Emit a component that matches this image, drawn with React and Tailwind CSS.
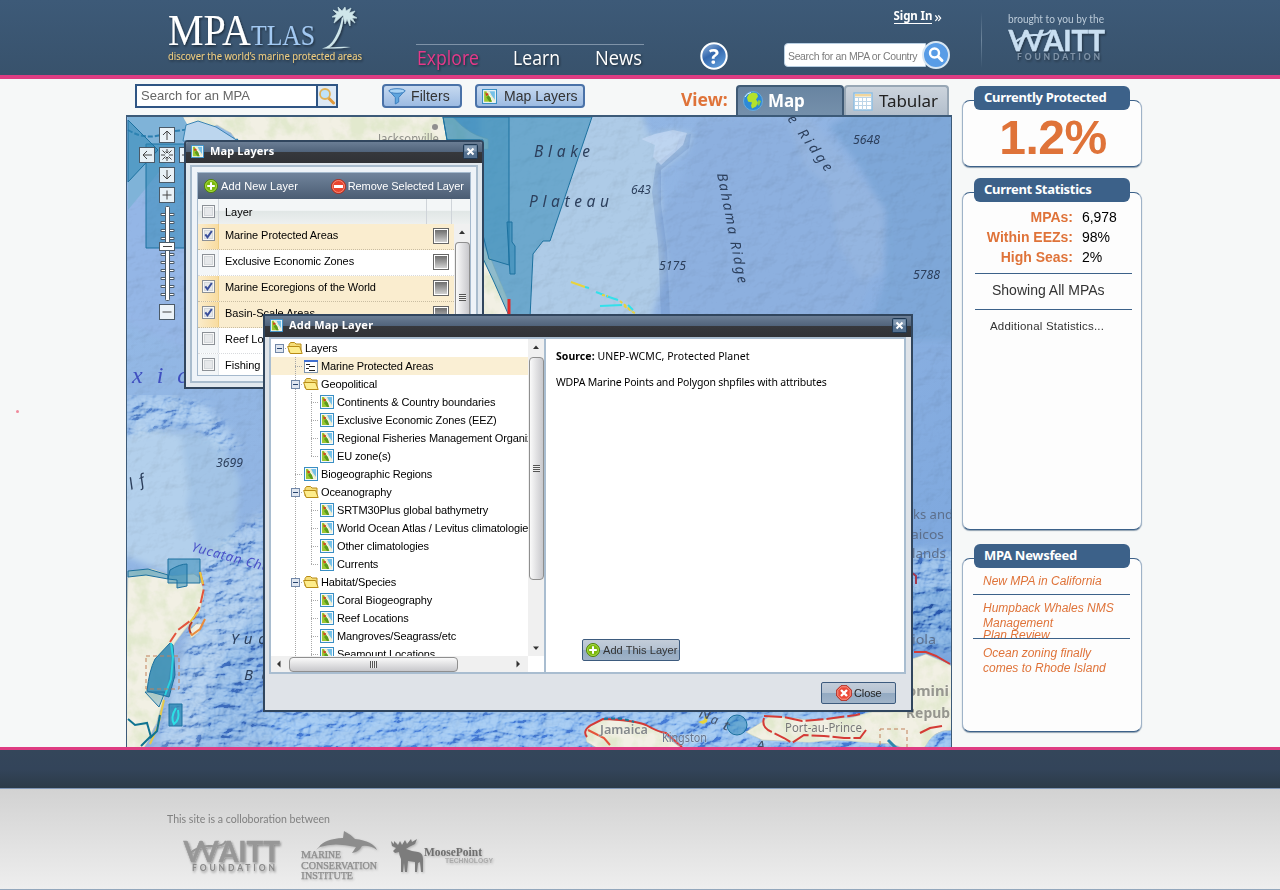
import React from "react";

const SANS = "'Liberation Sans', sans-serif";
const HUMAN = "'Noto Sans', 'Open Sans', sans-serif";

function T({ x, y, w, s = 13, f = HUMAN, fill = "#2c3f5c", squeeze = true, children, ...rest }) {
  return (
    <text
      x={x}
      y={y}
      fontSize={s}
      fontFamily={f}
      fill={fill}
      textLength={w}
      lengthAdjust={squeeze ? "spacingAndGlyphs" : "spacing"}
      {...rest}
    >
      {children}
    </text>
  );
}

/* ---------- icons ---------- */

function MapIcon({ size = 14 }) {
  return (
    <svg width={size} height={size} viewBox="0 0 14 14" className="shrink-0">
      <rect x="0" y="0" width="14" height="14" fill="#3a8fc4" />
      <rect x="1" y="1" width="12" height="12" fill="#f4f8fa" />
      <path d="M2 2h2.500l5 10H2z" fill="#9bc832" />
      <path d="M5 2H12v9z" fill="#74c0e8" />
      <path d="M4 2l1.500 2.500L8 6l1 3 1.500 3H12V10L9 6 7 2z" fill="#f1eed0" />
      <path d="M3 3l2 2 -1 2z" fill="#d8371f" />
      <path d="M4 8l2-2 2 2 1 4H7z" fill="#5c9a1c" />
      <circle cx="5" cy="5" r="1" fill="#d8371f" />
    </svg>
  );
}

function Folder() {
  return (
    <svg width="16" height="14" viewBox="0 0 16 14" className="shrink-0">
      <path d="M2 11V3.500L3.500 1.500h4L9 3h5v8z" fill="#f5dd78" stroke="#b98c16" />
      <path d="M.6 5.500h12l2.600 7H3.200z" fill="#fdec8c" stroke="#b98c16" strokeLinejoin="round" />
    </svg>
  );
}

function ListIcon() {
  return (
    <svg width="14" height="13" viewBox="0 0 14 13" className="shrink-0">
      <rect x=".5" y=".5" width="13" height="12" fill="#fff" stroke="#7d93ad" />
      <rect x="0" y="0" width="14" height="2" fill="#3f6fd0" />
      <path d="M2 4.500h4M5 6.500h6M2 8.500h3M5 10.500h6" stroke="#222" />
    </svg>
  );
}

function PlusIcon({ size = 14 }) {
  return (
    <svg width={size} height={size} viewBox="0 0 14 14" className="shrink-0">
      <circle cx="7" cy="7" r="6.500" fill="#7cb80c" stroke="#4f8208" />
      <circle cx="7" cy="7" r="5.500" fill="none" stroke="#a6d94a" />
      <path d="M7 3.200v7.600M3.200 7h7.600" stroke="#fff" strokeWidth="2" />
    </svg>
  );
}

function MinusIcon() {
  return (
    <svg width="15" height="15" viewBox="0 0 15 15" className="shrink-0">
      <circle cx="7.500" cy="7.500" r="7" fill="#e8452f" stroke="#b02a1a" />
      <circle cx="7.500" cy="7.500" r="6" fill="none" stroke="#f68c78" />
      <path d="M3 7.500h9" stroke="#fff" strokeWidth="3" />
    </svg>
  );
}

function StopIcon() {
  return (
    <svg width="16" height="16" viewBox="0 0 16 16" className="shrink-0">
      <path d="M5 .7h6L15.300 5v6L11 15.300H5L.7 11V5z" fill="#ec4a38" stroke="#b7291c" />
      <path d="M5.400 1.800h5.200l3.600 3.600v5.200l-3.600 3.600H5.400l-3.600-3.600V5.400z" fill="none" stroke="#f79a8c" />
      <path d="M5 5l6 6M11 5l-6 6" stroke="#fff" strokeWidth="2.400" />
    </svg>
  );
}

function CloseButton() {
  return (
    <svg width="15" height="15" viewBox="0 0 15 15" className="shrink-0">
      <rect x=".5" y=".5" width="14" height="14" rx="1" fill="#53708f" stroke="#1f3852" />
      <rect x="1.500" y="1.500" width="12" height="6" fill="#8299b2" />
      <path d="M4.500 4.500l6 6M10.500 4.500l-6 6" stroke="#fff" strokeWidth="2" />
    </svg>
  );
}

function CheckBox({ on }) {
  return (
    <svg width="13" height="13" viewBox="0 0 13 13" className="shrink-0">
      <rect x=".5" y=".5" width="12" height="12" fill="#f8f8f8" stroke="#8c9197" />
      <rect x="2.500" y="2.500" width="8" height="8" fill="#e6e8ea" stroke="#d3d7da" />
      {on && <path d="M3.300 6.300l2.200 3L9.800 3" fill="none" stroke="#3a4f9b" strokeWidth="2" />}
    </svg>
  );
}

/* ---------- scroll bars ---------- */

function Arrow({ dir }) {
  const d = {
    up: "M1 5l3-3.500L7 5z",
    down: "M1 2.500l3 3.500 3-3.500z",
    left: "M5.500 0.500v7L2 4z",
    right: "M2.500 0.500v7L6 4z",
  }[dir];
  return (
    <svg width="8" height="8" viewBox="0 0 8 8">
      <path d={d} fill="#333" />
    </svg>
  );
}

/* ---------- logos ---------- */

function Waitt({ main, sub, shadow }) {
  return (
    <svg width="104" height="36" viewBox="0 0 104 36" className="overflow-visible">
      <defs>
        <filter id={shadow} x="-10%" y="-10%" width="130%" height="140%">
          <feDropShadow dx="1" dy="1.500" stdDeviation=".8" floodOpacity=".4" />
        </filter>
      </defs>
      <g filter={`url(#${shadow})`}>
        <g fill={main} stroke={main} strokeWidth=".5">
          <T x="3" y="24" w="36" s="29" f="Lato, sans-serif" fill={main}>W</T>
          <T x="39" y="24" w="61" s="29" f="Lato, sans-serif" fill={main} fontWeight="700">AITT</T>
        </g>
        <path d="M9 16q10-9 22-8t15-5" fill="none" stroke={main} strokeWidth="2" />
        <T x="12" y="33" w="83" s="8.500" f="Lato, sans-serif" fill={sub} squeeze={false} fontWeight="700">FOUNDATION</T>
      </g>
    </svg>
  );
}

function SiteLogo() {
  return (
    <svg width="220" height="75" viewBox="160 0 220 75" className="shrink-0 overflow-visible">
      <defs>
        <filter id="logoShadow" x="-5%" y="-10%" width="115%" height="130%">
          <feDropShadow dx="1" dy="1.500" stdDeviation="1" floodOpacity=".5" />
        </filter>
      </defs>
      <g filter="url(#logoShadow)">
        <T x="168" y="45" w="83" s="44" f="'Liberation Serif', serif" fill="#fff">MPA</T>
        <T x="251" y="45" w="64" s="30" f="'Liberation Serif', serif" fill="#a3c9f2">TLAS</T>
        <path d="M322 48.500q8-1.500 13-11 5-9 7-20l1.500 0q-1 12-5 19-4 8-9 11 12-1.200 21-.6-10 2-28.500 1.600z" fill="#cfe6ea" />
        <path
          d="M343 15l-9 8 2-6-4 0 5-3-4-4 6 2-1-5 4 4 3-4 1 4 5-3-2 5 6-2-3 4 5 3-5 0 3 5-5-4 0 7-3-7-2 5z"
          fill="#cfe6ea"
          stroke="#cfe6ea"
          strokeWidth=".6"
        />
        <T x="168" y="60" w="194" s="11.500" fill="#f0cd7e">discover the world’s marine protected areas</T>
      </g>
    </svg>
  );
}

/* ---------- header ---------- */

function Header() {
  return (
    <header className="flex h-[79px] shrink-0 border-b-4 border-[#de3c82] bg-linear-to-b from-[#3d5a78] to-[#38526c] pl-[160px]">
      <SiteLogo />
      <nav className="mt-11 ml-9 h-8 w-[228px] shrink-0 border-t border-[#7f93a8]">
        <svg width="240" height="31" viewBox="416 45 240 31" className="overflow-visible drop-shadow-[1px_1px_1px_rgba(0,0,0,0.5)]">
          <T x="417" y="65" w="62" s="19.500" f="'Open Sans', sans-serif" fill="#e5398a">Explore</T>
          <T x="513" y="65" w="47" s="19.500" f="'Open Sans', sans-serif" fill="#fff">Learn</T>
          <T x="595" y="65" w="47" s="19.500" f="'Open Sans', sans-serif" fill="#fff">News</T>
        </svg>
      </nav>
      <svg width="30" height="30" viewBox="0 0 30 30" className="mt-[41px] ml-[55px] shrink-0">
        <defs>
          <linearGradient id="help" x1="0" x2=".6" y1="0" y2="1">
            <stop offset="0" stopColor="#9dbde2" />
            <stop offset=".5" stopColor="#3568ae" />
            <stop offset="1" stopColor="#5d9ad8" />
          </linearGradient>
        </defs>
        <circle cx="15" cy="15" r="12.700" fill="url(#help)" stroke="#fff" strokeWidth="2" />
        <text x="15" y="22.500" fontSize="21" fontWeight="700" fontFamily="Open Sans, sans-serif" fill="#fff" textAnchor="middle">?</text>
      </svg>
      <div className="ml-[55px] flex w-[168px] shrink-0 flex-col">
        <div className="mt-2 flex h-4 items-center justify-end gap-0.5 pr-[10px] font-['Noto_Sans'] text-[11.5px] font-bold text-white">
          <span className="border-b border-white leading-[14px] tracking-[-0.1px]">Sign In</span>
          <span className="text-[15px] leading-[14px] font-normal">»</span>
        </div>
        <div className="mt-4 flex items-center">
          <div className="flex h-6 w-[142px] items-center rounded-l border border-[#b9cfe2] bg-white pt-[3px] pl-[3px] font-['Liberation_Sans'] text-[10.5px] tracking-[-0.36px] whitespace-nowrap text-[#7c7c7c]">
            Search for an MPA or Country
          </div>
          <svg width="30" height="30" viewBox="0 0 30 30" className="-ml-[5px] shrink-0">
            <circle cx="15" cy="15" r="13" fill="#589ce6" stroke="#d8e6f2" strokeWidth="2" />
            <circle cx="13.500" cy="13" r="4.500" fill="none" stroke="#fff" strokeWidth="2.400" />
            <path d="M17 16.500l4 4" stroke="#fff" strokeWidth="3" strokeLinecap="round" />
          </svg>
        </div>
      </div>
      <div className="mt-3 ml-[29px] h-14 w-px bg-linear-to-b from-transparent via-[#6d859c] to-transparent" />
      <div className="ml-[23px] pt-[13px]">
        <svg width="104" height="14" viewBox="1005 13 104 14" className="block overflow-visible">
          <T x="1008" y="23" w="96" s="11.500" f="Lato, sans-serif" fill="#bccbd9">brought to you by the</T>
        </svg>
        <Waitt main="#c9dff2" sub="#8194a8" shadow="wh" />
      </div>
    </header>
  );
}

/* ---------- toolbar above the map ---------- */

function ToolButton({ className, children }) {
  return (
    <div
      className={
        "flex h-6 items-center rounded border-2 border-[#4a72a8] bg-linear-to-b from-[#c6d9f0] to-[#9dbbe2] font-['Liberation_Sans'] text-[14px] whitespace-nowrap text-[#333] " +
        className
      }
    >
      {children}
    </div>
  );
}

function Toolbar() {
  return (
    <div className="flex h-9 shrink-0 items-start pt-[5px] pl-[9px]">
      <div className="flex h-6 w-[203px] border-2 border-[#2f5584] bg-white">
        <div className="flex-1 pl-1 font-['Liberation_Sans'] text-[13px] leading-5 text-[#666]">Search for an MPA</div>
        <div className="flex w-5 items-center justify-center border-l-2 border-[#2f5584] bg-[#dde9f5]">
          <svg width="18" height="18" viewBox="0 0 18 18">
            <path d="M10.500 11l5 5" stroke="#e09a3c" strokeWidth="3" strokeLinecap="round" />
            <circle cx="7" cy="7" r="5" fill="#bfe2fa" stroke="#e0b25a" strokeWidth="1.800" />
          </svg>
        </div>
      </div>
      <ToolButton className="ml-11 w-20 pl-1">
        <svg width="18" height="17" viewBox="0 0 18 17" className="mr-[5px]">
          <path d="M1 2.500l6.300 7V16l3.400-2V9.500L17 2.500z" fill="#5fa5de" stroke="#3d7fbf" />
          <ellipse cx="9" cy="3" rx="8" ry="2.300" fill="#a9d3f5" stroke="#3d7fbf" />
        </svg>
        <span className="tracking-[0.1px]">Filters</span>
      </ToolButton>
      <ToolButton className="ml-[13px] w-[110px] pl-[5px]">
        <span className="mr-[7px]"><MapIcon size={15} /></span>
        <span className="tracking-[0.05px]">Map Layers</span>
      </ToolButton>
      <div className="ml-24 w-[55px] pt-[2px] font-['Noto_Sans'] text-[17.5px] font-bold text-[#df7339]">View:</div>
      <div className="mt-px flex h-[30px] w-[108px] items-center rounded-t border-2 border-b-0 border-[#3f5a75] bg-linear-to-b from-[#6884a1] to-[#7590ab] pl-[5px] font-['Noto_Sans'] text-[17px] font-bold text-white">
        <svg width="20" height="20" viewBox="0 0 20 20" className="mr-[5px]">
          <circle cx="10" cy="10" r="9.500" fill="#2c8ad8" stroke="#67a9dc" />
          <path d="M6 3l4-1.500 4 1 1 3-2 3 2 3-2 4-4 2-1-3 1-3-4-1-1-4z" fill="#b4e22c" />
          <path d="M15.500 9l2.500 1-2 5-2-2z" fill="#8fce3a" />
          <path d="M2 6q2-4 6-4.500" stroke="#d8f0ff" fill="none" />
        </svg>
        <span className="tracking-[-0.1px]">Map</span>
      </div>
      <div className="mt-px flex h-[30px] w-[105px] items-center rounded-t border-2 border-b-0 border-[#98a7b5] bg-linear-to-b from-[#ccd4dd] to-[#b3bfcc] pl-[7px] font-['Noto_Sans'] text-[17px] text-[#222]">
        <svg width="20" height="19" viewBox="0 0 20 19" className="mr-[6px]">
          <rect x="1" y="1" width="18" height="17" fill="#fff" stroke="#8fbfe2" strokeWidth="1.500" />
          <rect x="2" y="2" width="16" height="2.500" fill="#f0d59c" />
          <path d="M2 5.500h16M2 9.500h16M2 13.500h16M5.500 5v13M9.500 5v13M13.500 5v13" stroke="#bcd5e8" />
        </svg>
        <span className="tracking-[-0.1px]">Tabular</span>
      </div>
    </div>
  );
}

/* ---------- map ---------- */

function NavBox({ x, y, children }) {
  return (
    <g transform={`translate(${x} ${y})`}>
      <rect x=".5" y=".5" width="15" height="15" fill="#f3f7fa" fillOpacity=".93" stroke="#4b5a68" />
      <g fill="none" stroke="#444" strokeWidth="1">{children}</g>
    </g>
  );
}

const TICKS = [214, 222, 230, 238, 254, 262, 270, 278, 286, 294];

function OceanMap() {
  return (
    <svg width="824" height="630" viewBox="127 117 824 630" className="block">
      <defs>
        <filter id="relief" x="0" y="0" width="100%" height="100%">
          <feTurbulence type="fractalNoise" baseFrequency=".05 .06" numOctaves="5" seed="8" result="n" />
          <feDiffuseLighting in="n" surfaceScale="2.200" lightingColor="#fff" diffuseConstant="1.160">
            <feDistantLight azimuth="225" elevation="58" />
          </feDiffuseLighting>
        </filter>
        <filter id="rough" x="0" y="0" width="100%" height="100%">
          <feTurbulence type="fractalNoise" baseFrequency=".05 .08" numOctaves="5" seed="21" result="n" />
          <feDiffuseLighting in="n" surfaceScale="9" lightingColor="#dbe8fa" diffuseConstant="1" result="l">
            <feDistantLight azimuth="225" elevation="45" />
          </feDiffuseLighting>
          <feGaussianBlur in="SourceGraphic" stdDeviation="5" result="m" />
          <feComposite in="l" in2="m" operator="in" />
        </filter>
        <filter id="landNoise" x="0" y="0" width="100%" height="100%">
          <feTurbulence type="fractalNoise" baseFrequency=".06" numOctaves="4" seed="3" />
          <feColorMatrix values="0 0 0 0 .76  0 0 0 0 .81  0 0 0 0 .62  3 0 0 0 -1.150" result="g" />
          <feComposite in="g" in2="SourceGraphic" operator="in" result="gg" />
          <feMerge>
            <feMergeNode in="SourceGraphic" />
            <feMergeNode in="gg" />
          </feMerge>
        </filter>
        <filter id="soft"><feGaussianBlur stdDeviation="3" /></filter>
        <linearGradient id="sea" x1="0" x2="1" y1="0" y2="1">
          <stop offset="0" stopColor="#94bae6" />
          <stop offset=".5" stopColor="#90b3e2" />
          <stop offset="1" stopColor="#76a3dc" />
        </linearGradient>
      </defs>
      <rect x="127" y="117" width="824" height="630" fill="url(#sea)" />
      <g filter="url(#soft)">
        <path d="M480 110h160l10 26 20-6 22 4-6 16-28 22 4 50 4 50-16 50H480z" fill="#aecbe7" />
        <path d="M700 120l60-2 40 4 20 44 60 20 5 40-10 50-30 60H672l-4-60-10-60 22-30z" fill="#8db0df" />
        <path d="M785 112l25 4 40 50 35 44-2 60-20 12-24-36-10-60-24-20z" fill="#94b5e0" />
        <path d="M860 110h95v230h-90l20-60v-70l-26-44-30-40z" fill="#7ea7d8" />
        <path d="M120 440l20-12 40 6 12 20-4 50 14 60-6 20-76-30z" fill="#b3d0ec" />
        <path d="M180 430l40 10 20 40-6 60-24 30-16-40z" fill="#a3c4e6" />
        <path d="M120 200h70v150l-70-30z" fill="#94b6e6" />
        <path d="M262 555v90l-50 100h-60l30-90 20-60z" fill="#98bae4" />
        <path d="M270 600v150h-70q10-90 50-130z" fill="#7ca6dc" />
        <path d="M270 712h690v40H270z" fill="#86b2ea" />
        <path d="M900 590h60v60h-60z" fill="#6797d3" />
      </g>
      <path d="M691 134l-2 14-28 22 0 34 6 46 3 66-9 0-3-74-6-50 4-28 20-16 4-12z" fill="#6288c0" opacity=".3" />
      <path d="M655 134l18-4 14 3-4 12-22 20-8-8 2-12-14-6z" fill="#c5d9f3" opacity=".7" />
      <g style={{ mixBlendMode: "multiply" }} opacity=".42">
        <rect x="127" y="117" width="824" height="630" filter="url(#relief)" />
      </g>
      <g style={{ mixBlendMode: "soft-light" }}>
        <path
          d="M262 705h690v50H262z M127 395h40l40 10 25 30 10 15-20 0-30-25-65 10z M200 560l65-50v240h-110l30-100z M900 550h60v100h-60z"
          filter="url(#rough)"
        />
      </g>

      {/* land */}
      <g filter="url(#landNoise)" fill="#f2f0e4" stroke="#b9c1ae" strokeWidth=".6">
        <path d="M183 117l2 8 12 6 20-6 14 8 12 16h245v-10q-24-5-44-32z" />
        <path d="M483 245l8 14 8 20 9 22 2 18h-27z" />
        <path d="M128 571l24-2 20 7 22-2 6 4 4 16-4 16-14 18-12 16-6 40-12 40-12 24h-20z" />
        <path d="M190 630l6-6 7 0-4 8-8 6z" />
        <path d="M585 730l18-11 20 2 20 3 20 10 18 14h-84l-10-6z" />
        <path d="M762 722l8-6 40 4 40-2 22-6h40l-2-52 16-6 26 12v64q-20 0-28 18l-8 4-24-8-54-4-30 2-46-2-16-8z" />
      </g>
      <path d="M128 117h55l8 14-6 9-57 70z" fill="#7fb3d8" />
      <path d="M128 130q20 12 40 2l30-4 40 12" fill="none" stroke="#2c7fb0" strokeWidth="2" strokeDasharray="5 2" />
      <path d="M186 125l12-4 18 6 22 14h-55z" fill="#bcd6ee" stroke="#3a84b4" />

      {/* protected areas */}
      <g fill="#2b86b3" fillOpacity=".5" stroke="#1c719f">
        <path d="M146 144h50v104h-50z" />
        <path d="M128 120l30 30-30 32z" />
        <path d="M443 117h149l-42 124h-7l-10 13-3 64h-20l-16-36-14-30V140h-33z" />
        <path d="M443 117h66v148l-20-6-6-24V140h-36z" fillOpacity=".35" />
        <path d="M507 222h5v20l3 4v28h-5z" />
        <path d="M168 559h32v24h-32z" />
        <path d="M170 570q10-6 17-6v22l-10 2 0-8-9-1z" />
        <path d="M128 571l20-2 20 6v4l-22-4-18 2z" />
        <path d="M147 691q2-20 8-32l15-16 3 2 2 30-6 22z" fillOpacity=".85" />
        <path d="M145 692h20l-6 15z" fillOpacity=".3" />
        <path d="M169 704h13v22h-13z" fillOpacity=".8" />
        <circle cx="737" cy="725" r="10" />
      </g>
      <g fill="none" strokeWidth="2">
        <path d="M200 572l4 16-4 18-6 12-16 12-8 12" stroke="#e2543d" strokeDasharray="14 4" />
        <path d="M200 572l3 12M198 612l-8 10" stroke="#e8c93e" />
        <path d="M171 643l2 14-2 22-6 16" stroke="#29d3e0" />
        <path d="M164 700l-6 26-8 18" stroke="#e5c94a" />
        <path d="M160 715l-3 16-6 6-4-14-12 2-7-6M151 736l-10 10" stroke="#0f7391" />
        <path d="M176 708q-6 10-2 16 6-4 4-14" stroke="#2ce0e6" />
        <path d="M192 622q-5 8 0 13l8-6 5-10" stroke="#e88a3d" />
        <path d="M192 622q-5 6-1 11" stroke="#a33" strokeWidth="1.500" />
        <path d="M571 282l14 5" stroke="#e8d33c" />
        <path d="M585 287l4 1M596 292l8 3M606 296l12 4M600 306l22-1" stroke="#32e0ea" />
        <path d="M602 295l6 1M620 301l12 10M624 306l12 8" stroke="#e8d33c" strokeDasharray="3 2" />
        <path d="M628 305l5 5" stroke="#32e0ea" />
        <path d="M509 299v18" stroke="#e02b2b" strokeWidth="3" />
        <path d="M587 737q-5-6 4-12l12-6q30 1 43 6 12 7 20 8l16 14" stroke="#d43a35" />
        <path d="M588 730l16 8 6 7" stroke="#e5533a" />
        <path d="M604 719q16-2 30 3" stroke="#1c7a98" strokeDasharray="4 3" />
        <path d="M764 718q-3 10 8 14l12 6 8 5 12-8 20 1 20 2h16l6-8M764 716l20 1 18 4 24-2 30-4 4-1" stroke="#d43a35" strokeDasharray="18 3" />
        <path d="M914 652l12 0 10 4 14 8M920 733l10-5 12-2" stroke="#d43a35" />
      </g>
      <path d="M698 722l6-2 1-4 3 0-1 6-4 2z" fill="#e8d33c" />
      <path d="M146 656h33v33h-33z M880 729h27v30h-27z" fill="none" stroke="#c0805a" strokeDasharray="4 3" />
      <path d="M888 740l8 8" stroke="#2f87ad" strokeWidth="3" />
      <circle cx="435" cy="127" r="3" fill="#8f8f8f" />

      {/* place names and depths */}
      <g fontStyle="italic">
        <T x="534" y="157" w="56" s="15.500" squeeze={false}>Blake</T>
        <T x="529" y="207" w="80" s="15.500" squeeze={false}>Plateau</T>
        <T x="853" y="144" w="27" s="12">5648</T>
        <T x="631" y="194" w="20" s="12">643</T>
        <T x="659" y="270" w="27" s="12">5175</T>
        <T x="913" y="279" w="27" s="12">5788</T>
        <T x="216" y="467" w="27" s="12">3699</T>
        <T x="0" y="0" w="112" s="14" squeeze={false} transform="translate(717 174) rotate(79)">Bahama Ridge</T>
        <T x="0" y="0" w="66" s="14" squeeze={false} transform="translate(787 119) rotate(54)">e Ridge</T>
        <T x="231" y="644" w="34" s="15" squeeze={false}>Yuc</T>
        <T x="244" y="680" w="26" s="15" squeeze={false}>Ba</T>
        <T x="0" y="0" w="16" s="16" squeeze={false} transform="translate(131 490) rotate(-20)">lf</T>
        <T x="132" y="383" w="56" s="24" f="'Liberation Serif', serif" fill="#3f4fc0" squeeze={false}>xic</T>
        <T x="0" y="0" w="80" s="13" fill="#4a51c8" squeeze={false} transform="translate(191 551) rotate(15)">Yucatan Cha</T>
        <T x="698" y="717" w="12" s="13" fill="#44546c" transform="rotate(12 698 717)">N</T>
        <T x="710" y="723" w="7" s="13" fill="#44546c" transform="rotate(16 710 723)">a</T>
        <T x="722" y="729" w="6" s="13" fill="#44546c" transform="rotate(16 722 729)">t</T>
        <T x="756" y="750" w="9" s="13" fill="#44546c">A</T>
      </g>
      <T x="378" y="143" w="61" s="12" fill="#8e8e88">Jacksonville</T>
      <g fill="#7d828a" stroke="#f4f4ee" strokeWidth="1.500" strokeOpacity=".3" paintOrder="stroke">
        <T x="600" y="734" w="48" s="12.500" fill="#85898c" fontWeight="600">Jamaica</T>
        <T x="662" y="742" w="45" s="12" fill="#66748c">Kingston</T>
        <T x="785" y="732" w="77" s="12" fill="#777">Port-au-Prince</T>
        <T x="907" y="696" w="42" s="14" fill="#96968f" fontWeight="700">omini</T>
        <T x="906" y="718" w="44" s="14" fill="#96968f" fontWeight="700">Repub</T>
      </g>
      <g>
        <T x="912" y="644" w="24" s="13" fill="#5d6f8b">iola</T>
        <T x="913" y="519" w="40" s="13" fill="#5d6f8b">ks and</T>
        <T x="911" y="539" w="33" s="13" fill="#5d6f8b">aicos</T>
        <T x="912" y="558" w="34" s="13" fill="#5d6f8b">lands</T>
      </g>
      <path d="M911 572l5 4v8" stroke="#a33a50" strokeWidth="2" fill="none" />

      {/* pan and zoom control */}
      <NavBox x={159} y={127}><path d="M8 13V4M4 8l4-4 4 4" /></NavBox>
      <NavBox x={139} y={147}><path d="M13 8H4M8 4L4 8l4 4" /></NavBox>
      <NavBox x={179} y={147}><path d="M3 8h9M8 4l4 4-4 4" /></NavBox>
      <NavBox x={159} y={147}>
        <path d="M8 2v4M8 14v-4M2 8h4M14 8h-4M3.500 3.500l3 3M12.500 3.500l-3 3M3.500 12.500l3-3M12.500 12.500l-3-3M6.500 4.500L8 6l1.500-1.500M6.500 11.500L8 10l1.500 1.500" />
      </NavBox>
      <NavBox x={159} y={167}><path d="M8 3v9M4 8l4 4 4-4" /></NavBox>
      <NavBox x={159} y={187}><path d="M3.500 8h9M8 3.500v9" /></NavBox>
      <NavBox x={159} y={304}><path d="M3.500 8h9" /></NavBox>
      {TICKS.map((y) => (
        <g key={y}>
          <rect x="160.500" y={y - 1} width="14" height="3" rx="1" fill="#4b5a68" />
          <path d={`M161.500 ${y + 0.5}h12`} stroke="#fff" />
        </g>
      ))}
      <rect x="165.500" y="206.500" width="4" height="94" rx="1" fill="#fff" stroke="#4b5a68" />
      <rect x="159.500" y="242.500" width="15" height="8" fill="#fff" stroke="#4b5a68" />
      <path d="M163 246.500h9" stroke="#444" />
    </svg>
  );
}

/* ---------- windows ---------- */

function TitleBar({ children }) {
  return (
    <div className="flex h-[21px] shrink-0 items-center bg-[linear-gradient(#6b7e95,#50637a_48%,#36383c_50%,#303236)] pr-1 pb-[3px] pl-[5px] font-['Noto_Sans'] text-[11px] font-bold text-white">
      <MapIcon size={13} />
      <span className="ml-1.5 flex-1">{children}</span>
      <CloseButton />
    </div>
  );
}

const GRID = [
  ["Marine Protected Areas", true, "tracking-[-0.08px]"],
  ["Exclusive Economic Zones", false, "tracking-[-0.1px]"],
  ["Marine Ecoregions of the World", true, "tracking-[-0.1px]"],
  ["Basin-Scale Areas", true, "tracking-[0px]"],
  ["Reef Locations", false, "tracking-[0px]"],
  ["Fishing Effort", false, "tracking-[0px]"],
];

function MapLayersWindow() {
  return (
    <div className="absolute top-[23px] left-[57px] flex h-[249px] w-[300px] flex-col overflow-hidden rounded-t-sm border-2 border-[#31465e] bg-[#e1e8ee]">
      <TitleBar><span className="tracking-[0.15px]">Map Layers</span></TitleBar>
      <div className="mx-[4px] mt-[2px] mb-[4px] flex min-h-0 flex-1 flex-col border-2 border-[#a9bccd] bg-[#eef3f8] p-[5px]">
        <div className="flex min-h-0 flex-1 flex-col border border-[#a5b9cd] bg-white font-['Liberation_Sans'] text-[11px] text-black">
          <div className="flex h-[26px] shrink-0 items-center bg-linear-to-b from-[#71849c] to-[#4b5d73] pr-[6px] pl-[6px] text-white">
            <PlusIcon />
            <span className="ml-[3px] flex-1 tracking-[0.15px]">Add New Layer</span>
            <MinusIcon />
            <span className="ml-[2px] tracking-[-0.05px]">Remove Selected Layer</span>
          </div>
          <div className="flex h-[25px] shrink-0 bg-[linear-gradient(#f3f6f7_45%,#e1e7e6_50%,#edf0f0)]">
            <div className="flex w-[21px] items-center justify-center border-r border-[#cfd4d9]"><CheckBox /></div>
            <div className="flex-1 border-r border-[#cfd4d9] pl-[6px] leading-[26px]">Layer</div>
            <div className="w-[25px] border-r border-[#cfd4d9]" />
            <div className="w-[18px]" />
          </div>
          <div className="flex min-h-0 flex-1">
            <div className="min-w-0 flex-1 overflow-hidden">
              {GRID.map(([name, on, track]) => (
                <div
                  key={name}
                  className={"flex h-[26px] items-stretch border-b border-dotted " + (on ? "border-[#c9bda2] bg-[#faedcf]" : "border-[#d8dadd] bg-white")}
                >
                  <div className={"flex w-[21px] justify-center border-r pt-1 " + (on ? "border-[#f0cf86] bg-linear-to-r from-[#fbeccb] to-[#f8dca0]" : "border-[#e0e5ea] bg-[#f3f6f8]")}>
                    <CheckBox on={on} />
                  </div>
                  <div className={"flex-1 pl-[6px] leading-[23px] whitespace-nowrap " + track}>{name}</div>
                  <div className="mt-1 mr-[5px] h-4 w-4 border border-[#666] bg-white p-px">
                    <div className="h-full w-full bg-linear-to-b from-[#6e6e6e] to-[#d0d0d0]" />
                  </div>
                </div>
              ))}
            </div>
            <div className="flex w-[16px] flex-col items-center bg-[#f0f0f0] pt-[5px]">
              <Arrow dir="up" />
              <div className="mt-[5px] flex w-[15px] flex-1 items-start justify-center rounded-t-sm border border-b-0 border-[#8f8f8f] bg-linear-to-r from-[#fafafa] to-[#c8c8cc] pt-[51px]">
                <div className="h-[7px] w-[7px] bg-[repeating-linear-gradient(#555_0_1px,#eee_1px_2px)]" />
              </div>
            </div>
          </div>
        </div>
      </div>
    </div>
  );
}

const TREE = [
  [0, "folder", "Layers"],
  [1, "list", "Marine Protected Areas"],
  [1, "folder", "Geopolitical"],
  [2, "map", "Continents & Country boundaries"],
  [2, "map", "Exclusive Economic Zones (EEZ)"],
  [2, "map", "Regional Fisheries Management Organizations"],
  [2, "end", "EU zone(s)"],
  [1, "map", "Biogeographic Regions"],
  [1, "folder", "Oceanography"],
  [2, "map", "SRTM30Plus global bathymetry"],
  [2, "map", "World Ocean Atlas / Levitus climatologies"],
  [2, "map", "Other climatologies"],
  [2, "end", "Currents"],
  [1, "folder", "Habitat/Species"],
  [2, "map", "Coral Biogeography"],
  [2, "map", "Reef Locations"],
  [2, "map", "Mangroves/Seagrass/etc"],
  [2, "map", "Seamount Locations"],
];

function Guide({ kind }) {
  return (
    <svg width="16" height="18" viewBox="0 0 16 18" className="shrink-0">
      <g stroke="#a8a8a8" strokeDasharray="1 1">
        {(kind === "line" || kind === "tee" || kind === "box") && <path d="M8.500 0v18" />}
        {kind === "end" && <path d="M8.500 0v9" />}
        {kind !== "line" && kind !== "none" && <path d="M8 9.500h8" />}
      </g>
      {(kind === "box" || kind === "root") && (
        <>
          <rect x="4.500" y="5.500" width="8" height="8" fill="#dfe6f0" stroke="#7288a8" />
          <path d="M6 9.500h5" stroke="#26436e" />
        </>
      )}
    </svg>
  );
}

function TreeRow({ level, kind, label }) {
  return (
    <div className={"flex h-[18px] items-center whitespace-nowrap " + (kind === "list" ? "bg-[#faefd4]" : "")}>
      {level > 0 && <Guide kind="none" />}
      {level > 1 && <Guide kind="line" />}
      <Guide kind={level === 0 ? "root" : kind === "folder" ? "box" : kind === "end" ? "end" : "tee"} />
      <span className="flex w-[18px] shrink-0 pl-px">
        {kind === "folder" ? <span className="-ml-px"><Folder /></span> : kind === "list" ? <ListIcon /> : <MapIcon />}
      </span>
      <span className="tracking-[-0.12px]">{label}</span>
    </div>
  );
}

function AddLayerWindow() {
  return (
    <div className="absolute top-[197px] left-[136px] flex h-[398px] w-[650px] flex-col border-2 border-[#31465e] bg-[#dfe3e8]">
      <TitleBar><span className="tracking-[0.2px]">Add Map Layer</span></TitleBar>
      <div className="mr-[5px] ml-[4px] flex h-[337px] shrink-0 border-2 border-[#a9bdd0] bg-white font-['Liberation_Sans'] text-[11px] text-black">
        <div className="flex w-[273px] shrink-0 flex-col">
          <div className="flex h-[317px]">
            <div className="w-[257px] overflow-hidden">
              {TREE.map(([level, kind, label]) => (
                <TreeRow key={label} level={level} kind={kind} label={label} />
              ))}
            </div>
            <div className="flex w-[16px] flex-col items-center bg-[#f0f0f0] pt-[5px] pb-1">
              <Arrow dir="up" />
              <div className="mt-[5px] flex h-[223px] w-[15px] items-center justify-center rounded-sm border border-[#8f8f8f] bg-linear-to-r from-[#fafafa] to-[#c8c8cc]">
                <div className="h-[7px] w-[7px] bg-[repeating-linear-gradient(#555_0_1px,#eee_1px_2px)]" />
              </div>
              <div className="flex-1" />
              <Arrow dir="down" />
            </div>
          </div>
          <div className="flex h-4 w-[257px] items-center bg-[#f0f0f0] pr-[6px] pl-1">
            <Arrow dir="left" />
            <div className="ml-[6px] flex h-[15px] w-[169px] items-center justify-center rounded-sm border border-[#8f8f8f] bg-linear-to-b from-[#fafafa] to-[#c8c8cc]">
              <div className="h-[7px] w-[7px] bg-[repeating-linear-gradient(90deg,#555_0_1px,#eee_1px_2px)]" />
            </div>
            <div className="flex-1" />
            <Arrow dir="right" />
          </div>
        </div>
        <div className="flex flex-1 flex-col items-start border-l-2 border-[#a9bdd0] pt-[9px] pl-[10px] font-['Noto_Sans'] text-[10.5px] leading-[16px]">
          <div className="tracking-[0.05px]"><b>Source:</b> UNEP-WCMC, Protected Planet</div>
          <div className="mt-[10px] tracking-[-0.19px]">WDPA Marine Points and Polygon shpfiles with attributes</div>
          <div className="mt-auto mb-[11px] ml-[26px] flex h-[22px] w-[98px] items-center gap-[3px] rounded-xs border border-[#3d5b7e] bg-[linear-gradient(#c3cdd9,#b4c2d2_50%,#93aac2_52%,#a0b3c8)] pl-[3px] font-['Liberation_Sans'] text-[11px] whitespace-nowrap text-[#333]">
            <PlusIcon />
            <span className="tracking-[0.05px]">Add This Layer</span>
          </div>
        </div>
      </div>
      <div className="flex flex-1 items-center justify-end pt-[2px] pr-[15px]">
        <div className="flex h-[22px] w-[75px] items-center gap-[2px] rounded-xs border border-[#3d5b7e] bg-[linear-gradient(#c3cdd9,#b4c2d2_50%,#93aac2_52%,#a0b3c8)] pl-[14px] font-['Liberation_Sans'] text-[11px] tracking-[-0.1px] text-[#222]">
          <StopIcon />
          Close
        </div>
      </div>
    </div>
  );
}

/* ---------- side cards ---------- */

function Card({ title, height, children }) {
  return (
    <section className="flex flex-col">
      <div className="z-10 mx-3 flex h-6 items-center rounded-md bg-[#3c6189] pl-[10px] font-['Noto_Sans'] text-[13px] font-bold tracking-[-0.3px] text-white">
        {title}
      </div>
      <div className={"-mt-[10px] rounded-lg border border-x-[#9fb3c8] border-y-[#3c6189] bg-[#fdfdfd] pt-[10px] font-['Liberation_Sans'] shadow-[0_1px_1px_#8fa0b0] " + height}>
        {children}
      </div>
    </section>
  );
}

const STATS = [
  ["MPAs:", "6,978"],
  ["Within EEZs:", "98%"],
  ["High Seas:", "2%"],
];

function Sidebar() {
  return (
    <aside className="ml-[10px] w-[180px] pt-[7px]">
      <Card title="Currently Protected" height="h-[67px]">
        <div className="pl-[2px] text-center text-[48px] leading-[54px] font-bold tracking-[-0.5px] text-[#df7339]">1.2%</div>
      </Card>
      <div className="h-[11px]" />
      <Card title="Current Statistics" height="h-[338px]">
        <div className="pt-[4px]">
          {STATS.map(([k, v]) => (
            <div key={k} className="flex h-5 items-center gap-[9px]">
              <span className="w-[110px] text-right text-[14px] font-bold whitespace-nowrap text-[#df7339]">{k}</span>
              <span className="text-[14px] tracking-[-0.05px] text-black">{v}</span>
            </div>
          ))}
        </div>
        <div className="mt-[6px] mr-[9px] ml-3 h-[37px] border-y border-[#3c6189] pl-[17px] text-[14px] leading-[33px] text-[#333]">Showing All MPAs</div>
        <div className="pt-2 pl-[27px] text-[11.5px] tracking-[0.2px] text-[#333]">Additional Statistics...</div>
      </Card>
      <div className="h-[14px]" />
      <Card title="MPA Newsfeed" height="h-[174px]">
        <div className="mr-[11px] ml-[10px] text-[12px] leading-[15px] text-[#df7339] italic">
          <div className="h-[26px] border-b border-[#3c6189] pt-[5px] pl-[10px]">New MPA in California</div>
          <div className="h-[44px] overflow-hidden border-b border-[#3c6189] pt-[6px] pl-[10px]">
            <div className="whitespace-nowrap">Humpback Whales NMS</div>
            <div>Management</div>
            <div className="-mt-[3px]">Plan Review</div>
          </div>
          <div className="pt-[7px] pl-[10px] whitespace-nowrap">Ocean zoning finally<br />comes to Rhode Island</div>
        </div>
      </Card>
    </aside>
  );
}

/* ---------- footer ---------- */

function Footer() {
  return (
    <footer className="flex flex-1 flex-col">
      <div className="h-[42px] shrink-0 border-t-3 border-b border-t-[#de3c82] border-b-[#7f95b5] bg-linear-to-b from-[#34465a] via-[#33445a] to-[#2c3b48]" />
      <div className="flex-1 border-b border-[#93a7bc] bg-linear-to-b from-[#d2d2d2] to-[#eeeeee] pt-[22px] pl-[165px]">
        <svg width="180" height="16" viewBox="165 811 180 16" className="block overflow-visible">
          <T x="167" y="823" w="163" s="12" f="Lato, sans-serif" fill="#808080">This site is a colloboration between</T>
        </svg>
        <div className="flex">
          <div className="mt-[11px] ml-[15px]"><Waitt main="#979797" sub="#888" shadow="wf" /></div>
          <svg width="200" height="60" viewBox="296 826 200 60" className="ml-3 overflow-visible drop-shadow-[1px_1px_1px_rgba(0,0,0,0.2)]">
            <path d="M316 849l3-3q5-8 24-9l1-7q6 3 11 8 18 2 22 11-7-5-15-4-3 6-10 7l4-6q-22-5-36 0z" fill="#8d8d8d" />
            <g stroke="#8d8d8d" strokeWidth=".25">
              <T x="301" y="857" w="40" s="9.500" f="'Liberation Serif', serif" fill="#8d8d8d"><tspan fontSize="11">M</tspan>ARINE</T>
              <T x="301" y="867.500" w="76" s="9.500" f="'Liberation Serif', serif" fill="#8d8d8d"><tspan fontSize="11">C</tspan>ONSERVATION</T>
              <T x="301" y="878" w="52" s="9.500" f="'Liberation Serif', serif" fill="#8d8d8d"><tspan fontSize="11">I</tspan>NSTITUTE</T>
            </g>
            <path
              d="M391 840L394 843L394 840L398 844L400 840L402 844L405 839L407 843L411 838L412 841L417 838L415 843L409 846L406 848L412 850L418 851Q423 852 423 858V871H421L420 861L418 862L417 871H415L415 861L408 860L407 871H405L404 862L403 871H401V858Q399 854 399 851L395 852L393 850L396 847L392 845Z"
              fill="#7c7c7c"
            />
            <T x="424" y="855" w="58" s="12" f="'Liberation Serif', serif" fill="#6f6f6f" fontWeight="700">MoosePoint</T>
            <T x="445" y="862" w="48" s="7" f={SANS} fill="#aaa" fontWeight="700">TECHNOLOGY</T>
          </svg>
        </div>
      </div>
    </footer>
  );
}

export default function App() {
  return (
    <div className="relative flex h-[890px] w-[1280px] flex-col overflow-hidden bg-[#f6f8f8]">
      <Header />
      <main className="flex h-[668px] shrink-0 pl-[126px]">
        <div className="flex w-[826px] flex-col">
          <Toolbar />
          <div className="relative flex-1 overflow-hidden border-x border-t-2 border-[#3c5a78]">
            <OceanMap />
            <MapLayersWindow />
            <AddLayerWindow />
          </div>
        </div>
        <Sidebar />
      </main>
      <Footer />
      <div className="absolute top-[410px] left-4 h-[3px] w-[3px] rounded-full bg-[#f08a9c]" />
    </div>
  );
}
